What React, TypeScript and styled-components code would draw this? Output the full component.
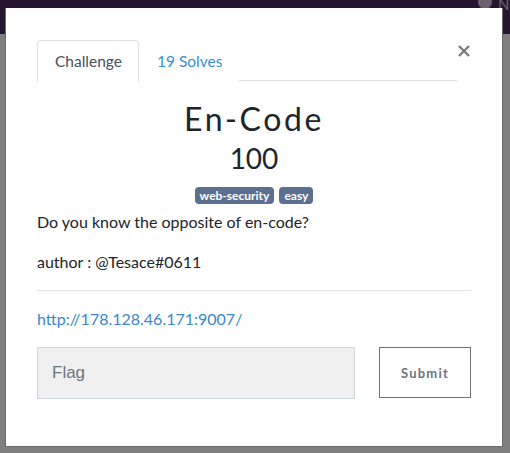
import React from "react";
import styled, { createGlobalStyle } from "styled-components";

const Global = createGlobalStyle`
  html, body { margin: 0; padding: 0; }
  body {
    font-family: Lato, "Noto Sans", sans-serif;
    background: #7f7f7f;
    width: 510px;
    height: 453px;
    overflow: hidden;
  }
`;

const Page = styled.div`
  position: relative;
  width: 510px;
  height: 453px;
  background: #7f7f7f;
`;

const Navbar = styled.div`
  height: 34px;
  background: #26152f;
  display: flex;
  justify-content: flex-end;
  align-items: flex-start;
  gap: 6px;
  overflow: hidden;
`;

const Avatar = styled.div`
  width: 14px;
  height: 14px;
  margin-top: -5px;
  border-radius: 50%;
  background: #6b6170;
`;

const NavText = styled.span`
  font-size: 15px;
  line-height: 12px;
  color: #6b6170;
  margin-top: -2px;
  width: 12px;
  overflow: hidden;
`;

const Modal = styled.div`
  position: absolute;
  left: 5px;
  top: 8px;
  width: 498px;
  height: 439px;
  box-sizing: border-box;
  background: #fff;
  border: 1px solid #6a6a6a;
  border-top: none;
  padding: 32px 31px 0 31px;
  display: flex;
  flex-direction: column;
`;

const Header = styled.div`
  display: flex;
  align-items: flex-start;
`;

const Tabs = styled.div`
  flex: 1;
  display: flex;
  border-bottom: 1px solid #dee2e6;
  height: 41px;
  box-sizing: border-box;
`;

const Tab = styled.div<{ $active?: boolean }>`
  box-sizing: border-box;
  height: 42px;
  padding: 0 16px 0 17px;
  display: flex;
  align-items: center;
  font-size: 15.5px;
  border: 1px solid ${(p) => (p.$active ? "#dee2e6" : "transparent")};
  border-bottom-color: ${(p) => (p.$active ? "#fff" : "transparent")};
  border-radius: 4px 4px 0 0;
  color: ${(p) => (p.$active ? "#495057" : "#3b8ed4")};
  background: #fff;
`;

const Close = styled.button`
  width: 14px;
  height: 14px;
  margin-top: 4px;
  padding: 0;
  border: none;
  background: none;
  display: flex;
  align-items: center;
  justify-content: center;
`;

const Title = styled.h3`
  margin: 19px 0 0 0;
  text-align: center;
  font-family: Lato, sans-serif;
  font-weight: 400;
  font-size: 32px;
  line-height: 38px;
  letter-spacing: 2.6px;
  color: #212529;
`;

const Value = styled.h4`
  margin: 3px 0 0 0;
  text-align: center;
  font-weight: 400;
  font-size: 28px;
  line-height: 34px;
  color: #212529;
`;

const Badges = styled.div`
  display: flex;
  justify-content: center;
  gap: 5px;
  margin-top: 12px;
`;

const Badge = styled.span`
  background: #5b7090;
  color: #fff;
  font-size: 12px;
  font-weight: 700;
  line-height: 17px;
  padding: 0 5px;
  border-radius: 4px;
`;

const Description = styled.div`
  margin-top: 6px;
  font-size: 16px;
  line-height: 24px;
  color: #212529;
  p { margin: 0 0 16px 0; }
`;

const Rule = styled.hr`
  border: none;
  border-top: 1px solid #e5e5e5;
  margin: 0 0 16px 0;
`;

const Link = styled.a`
  font-size: 16px;
  line-height: 24px;
  color: #3a87c9;
  text-decoration: none;
`;

const FormRow = styled.div`
  display: flex;
  margin-top: 16px;
  gap: 24px;
`;

const FlagInput = styled.input`
  box-sizing: border-box;
  width: 318px;
  height: 52px;
  background: #f0f0f0;
  border: 1px solid #d0d6de;
  padding: 0 14px;
  font-family: "Liberation Sans", Arial, sans-serif;
  font-size: 17px;
  color: #495057;
  outline: none;
  &::placeholder { color: #6c757d; }
`;

const Submit = styled.button`
  box-sizing: border-box;
  width: 92px;
  height: 51px;
  background: #fff;
  border: 1px solid #6c757d;
  font-family: Lato, sans-serif;
  font-weight: 700;
  font-size: 13px;
  letter-spacing: 1.2px;
  color: #6c757d;
`;

export default function App() {
  return (
    <>
      <Global />
      <Page>
        <Navbar>
          <Avatar />
          <NavText>N</NavText>
        </Navbar>
        <Modal>
          <Header>
            <Tabs>
              <Tab $active>Challenge</Tab>
              <Tab>19 Solves</Tab>
            </Tabs>
            <Close aria-label="Close">
              <svg width="12" height="12" viewBox="0 0 12 12">
                <path d="M1 1 L11 11 M11 1 L1 11" stroke="#7d7d7d" strokeWidth="2.4" strokeLinecap="butt" />
              </svg>
            </Close>
          </Header>
          <Title>En-Code</Title>
          <Value>100</Value>
          <Badges>
            <Badge>web-security</Badge>
            <Badge>easy</Badge>
          </Badges>
          <Description>
            <p>Do you know the opposite of en-code?</p>
            <p>author : @Tesace#0611</p>
          </Description>
          <Rule />
          <div>
            <Link href="#">http://178.128.46.171:9007/</Link>
          </div>
          <FormRow>
            <FlagInput placeholder="Flag" />
            <Submit>Submit</Submit>
          </FormRow>
        </Modal>
      </Page>
    </>
  );
}
